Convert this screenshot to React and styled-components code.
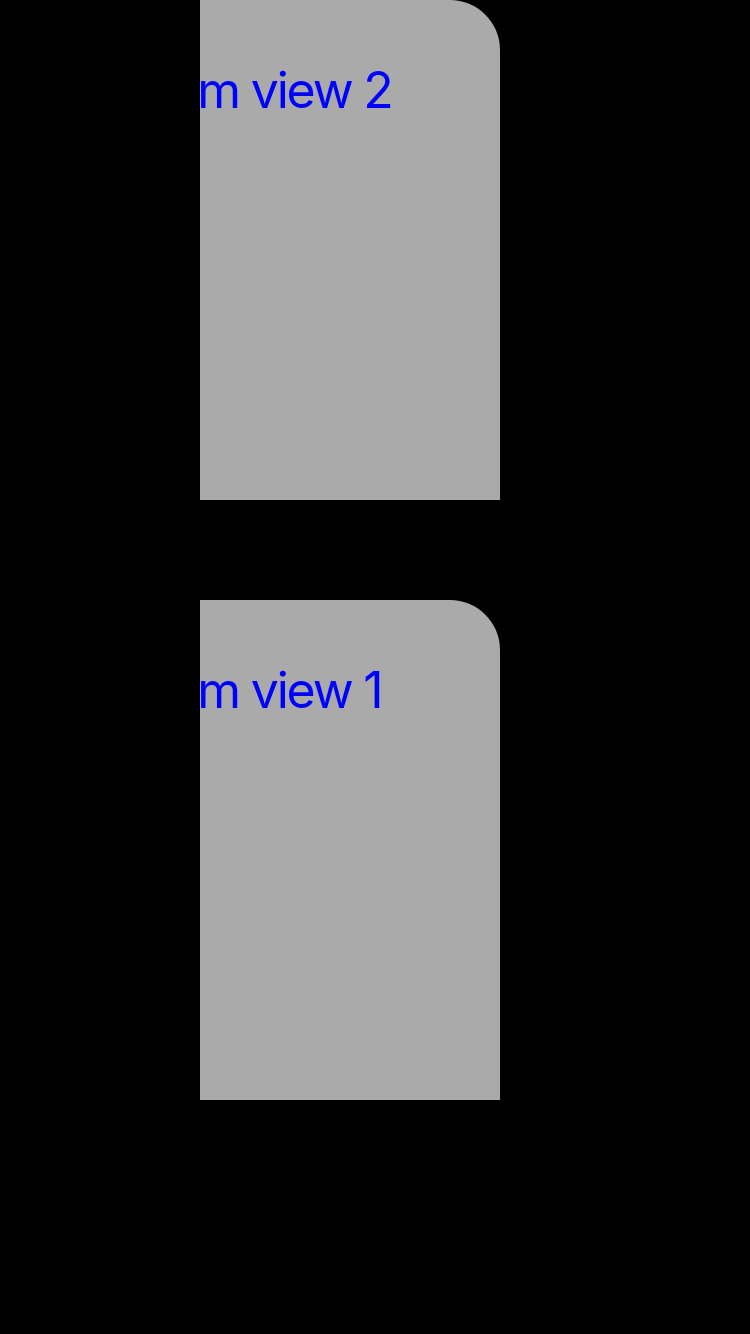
import styled, { createGlobalStyle } from "styled-components";

const GlobalStyle = createGlobalStyle`
  html, body {
    margin: 0;
    padding: 0;
    background: #000;
  }
  body {
    font-family: Inter, "Noto Sans", sans-serif;
  }
`;

const Screen = styled.div`
  width: 750px;
  height: 1334px;
  background: #000;
  display: flex;
  flex-direction: column;
  gap: 100px;
  padding-left: 200px;
  box-sizing: border-box;
  overflow: hidden;
`;

const CustomView = styled.div`
  width: 300px;
  height: 500px;
  background: #aaaaaa;
  border-top-right-radius: 50px;
  overflow: hidden;
  padding-top: 60px;
  box-sizing: border-box;
`;

const Label = styled.div`
  margin-left: -130px;
  white-space: nowrap;
  font-size: 50px;
  line-height: 60px;
  letter-spacing: -2.2px;
  color: #0000ff;
`;

const views = ["Custom view 2", "Custom view 1"];

const App = () => (
  <>
    <GlobalStyle />
    <Screen>
      {views.map((title) => (
        <CustomView key={title}>
          <Label>{title}</Label>
        </CustomView>
      ))}
    </Screen>
  </>
);

export default App;
